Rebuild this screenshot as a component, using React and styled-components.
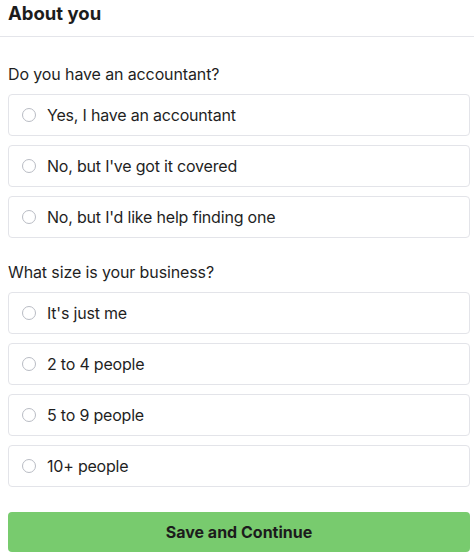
import React from "react";
import styled, { createGlobalStyle } from "styled-components";

const Global = createGlobalStyle`
  html, body { margin: 0; padding: 0; background: #fff; }
  body { font-family: "Inter", "Liberation Sans", sans-serif; color: #1f1f1f; }
  * { box-sizing: border-box; }
`;

const Page = styled.div`
  width: 474px;
  display: flex;
  flex-direction: column;
`;

const Header = styled.header`
  height: 37px;
  padding: 0 8px;
  border-bottom: 1px solid #e4e5ea;
  display: flex;
  align-items: flex-start;
`;

const Title = styled.h1`
  margin: 1px 0 0;
  font-size: 18.5px;
  font-weight: 700;
  line-height: 24px;
  color: #1c1c1c;
`;

const Body = styled.div`
  padding: 27px 4px 0 8px;
  display: flex;
  flex-direction: column;
`;

const Group = styled.fieldset`
  border: 0;
  margin: 0 0 24px;
  padding: 0;
  display: flex;
  flex-direction: column;
  gap: 9px;
`;

const Question = styled.legend`
  padding: 0;
  font-size: 16px;
  line-height: 20px;
  margin-bottom: 10px;
  letter-spacing: -0.12px;
  color: #1f1f1f;
`;

const Option = styled.label`
  height: 42px;
  border: 1px solid #e3e4e9;
  border-radius: 4px;
  display: flex;
  align-items: center;
  padding: 0 0 0 13px;
  gap: 11px;
  font-size: 16px;
  letter-spacing: -0.2px;
  color: #1f1f1f;
  cursor: pointer;
`;

const Radio = styled.span`
  width: 14px;
  height: 14px;
  border-radius: 50%;
  border: 1px solid #b9bcc4;
  background: #fff;
  flex: none;
`;

const Button = styled.button`
  height: 40px;
  margin-top: 1px;
  border: 0;
  border-radius: 4px;
  background: #78cb6e;
  color: #1c1c1c;
  font-family: inherit;
  font-size: 16px;
  font-weight: 700;
  cursor: pointer;
`;

const questions = [
  {
    q: "Do you have an accountant?",
    options: ["Yes, I have an accountant", "No, but I've got it covered", "No, but I'd like help finding one"],
  },
  {
    q: "What size is your business?",
    options: ["It's just me", "2 to 4 people", "5 to 9 people", "10+ people"],
  },
];

export default function App() {
  return (
    <Page>
      <Global />
      <Header>
        <Title>About you</Title>
      </Header>
      <Body>
        {questions.map((g) => (
          <Group key={g.q}>
            <Question>{g.q}</Question>
            {g.options.map((o) => (
              <Option key={o}>
                <Radio />
                {o}
              </Option>
            ))}
          </Group>
        ))}
        <Button>Save and Continue</Button>
      </Body>
    </Page>
  );
}
